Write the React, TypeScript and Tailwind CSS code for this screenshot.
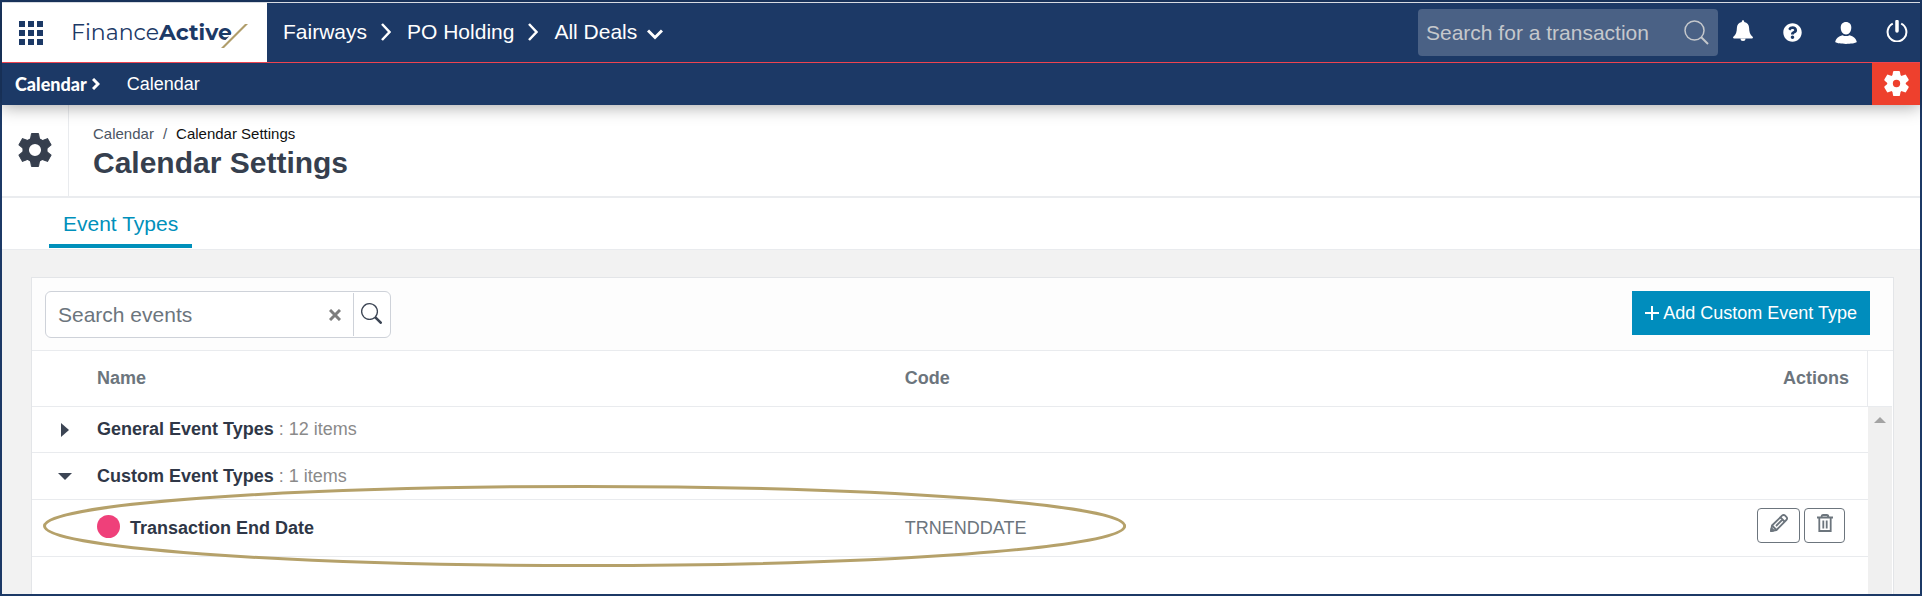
import { useState } from 'react'
import { BsSearch } from 'react-icons/bs'
import { FaQuestionCircle } from 'react-icons/fa'

const navItems = ['Fairways', 'PO Holding']

const customEvents = [{ name: 'Transaction End Date', code: 'TRNENDDATE' }]

function ChevronRight() {
  return (
    <svg viewBox="0 0 10 18" className="h-[18px] w-[10px]" fill="none" stroke="currentColor" strokeWidth="2.500">
      <path d="M1 1l7.500 8L1 17" />
    </svg>
  )
}

function GearIcon({ className, rounded = false }: { className: string; rounded?: boolean }) {
  return (
    <svg viewBox="0 0 36 36" className={className} fill="none" stroke="currentColor" strokeLinejoin={rounded ? 'round' : 'miter'}>
      <circle cx="18" cy="18" r="9.3" strokeWidth={rounded ? 8 : 6.5} />
      {[0, 60, 120, 180, 240, 300].map((angle) => (
        <path
          key={angle}
          d="M13.500 7l1-5.500h7l1 5.500z"
          fill="currentColor"
          strokeWidth={rounded ? 3 : 1}
          transform={`rotate(${angle} 18 18)`}
        />
      ))}
    </svg>
  )
}

function BellIcon() {
  return (
    <svg viewBox="0 0 20 22" className="h-[22px] w-5" fill="currentColor">
      <path d="M8.800 1.500a1.200 1.200 0 0 1 2.400 0v.4c3.200.6 4.800 2.900 4.900 5.900.1 4 .8 7 3.500 8.900.6.600.5 1.800-.6 1.800H1c-1.100 0-1.200-1.200-.6-1.800C3.100 14.800 3.800 11.800 3.900 7.800c.1-3 1.700-5.300 4.900-5.900z" />
      <path d="M7.500 18.500h5a2.500 2.500 0 0 1-5 0z" />
    </svg>
  )
}

function UserIcon() {
  return (
    <svg viewBox="0 0 22 22" className="size-[22px]" fill="currentColor">
      <path d="M11 0c3.300 0 5.300 2.300 5.300 5.500 0 3.800-2.100 7-5.300 7s-5.300-3.200-5.300-7C5.700 2.300 7.700 0 11 0z" />
      <path d="M7.500 13.200c2.200 1.200 4.800 1.200 7 0 4 1 6.800 3.600 7.300 6.900C18.500 22.600 3.500 22.600.2 20.100.7 16.800 3.500 14.200 7.500 13.200z" />
    </svg>
  )
}

function PowerIcon() {
  return (
    <svg viewBox="0 0 22 22" className="size-[22px]" fill="none" stroke="currentColor" strokeLinecap="round">
      <path d="M6.800 3.600a9.400 9.400 0 1 0 8.400 0" strokeWidth="2" strokeLinecap="butt" />
      <path d="M11 1.500v9.500" strokeWidth="3.500" />
    </svg>
  )
}

function PencilIcon() {
  return (
    <svg viewBox="0 0 18 18" className="size-[18px]" fill="none" stroke="currentColor" strokeWidth="1.800" strokeLinejoin="round">
      <path d="M1 17l1-5.500L12 1.700c1-1 2.300-.9 3.200 0l1.100 1.100c.9.900 1 2.200 0 3.200L6.500 16z" />
      <path d="M10.500 3.500l4 4M2 11.500l4.500 4.500M6 12l6.500-6.500M1 17l2.500-.5L1.500 14.500z" />
    </svg>
  )
}

function TrashIcon() {
  return (
    <svg viewBox="0 0 16 18" className="h-[18px] w-4" fill="none" stroke="currentColor" strokeWidth="1.800">
      <path d="M0 3.500h16M2.300 3.500v13.500h11.400V3.500M4.500 3.500c0-1.800.6-2.500 1.800-2.500h3.400c1.200 0 1.800.7 1.800 2.500" />
      <path d="M6.300 6.500v8M9.700 6.500v8" />
    </svg>
  )
}

function Logo() {
  return (
    <a href="#home" className="relative ml-7 block font-[Montserrat,Lato,sans-serif] text-[22px] leading-[30px] text-[#1c3966]">
      <span>Finance</span>
      <span className="font-bold">Active</span>
      <svg viewBox="0 0 27 24" className="absolute -right-4 bottom-0 h-6 w-[27px]">
        <path d="M-3 24L20 0h4L1 24z" fill="#fff" />
        <path d="M0 24L24 0h3L3 24z" fill="#b09d6b" />
      </svg>
    </a>
  )
}

function TopBar() {
  return (
    <header className="flex h-[61px] items-stretch border-t border-b border-t-[#d7dbe2] border-b-[#ee4450] text-white">
      <div className="flex w-[265px] shrink-0 items-center bg-white pl-[17px]">
        <button aria-label="Applications" className="text-[#1c3966]">
          <svg viewBox="0 0 24 24" className="size-6" fill="currentColor">
            <path d="M0 0h6v6H0zM9 0h6v6H9zM18 0h6v6h-6zM0 9h6v6H0zM9 9h6v6H9zM18 9h6v6h-6zM0 18h6v6H0zM9 18h6v6H9zM18 18h6v6h-6z" />
          </svg>
        </button>
        <Logo />
      </div>
      <nav className="flex items-center gap-4 pb-px pl-4 text-[21px]">
        {navItems.map((item) => (
          <div key={item} className="flex items-center gap-[14px]">
            <a href="#nav">{item}</a>
            <ChevronRight />
          </div>
        ))}
        <button className="flex items-center gap-[10px]">
          All Deals
          <svg viewBox="0 0 16 11" className="mt-1 h-[11px] w-4" fill="none" stroke="currentColor" strokeWidth="3">
            <path d="M1 1.500l7 7 7-7" />
          </svg>
        </button>
      </nav>
      <div className="ml-auto flex items-center pr-3">
        <label className="flex h-[47px] w-[300px] items-center rounded bg-[#4a6185] pr-[9px] pl-2">
          <input
            type="text"
            aria-label="Search for a transaction"
            placeholder="Search for a transaction"
            className="min-w-0 flex-1 bg-transparent text-[21px] outline-none placeholder:text-[#c5c8cc]"
          />
          <svg viewBox="0 0 25 25" className="size-[25px]" fill="none" stroke="#c5c8cc">
            <circle cx="10.500" cy="10.500" r="9.500" strokeWidth="1.500" />
            <path d="M17 17l7 7" strokeWidth="2" />
          </svg>
        </label>
        <div className="flex items-center pb-1">
          <button aria-label="Notifications" className="ml-[15px]"><BellIcon /></button>
          <button aria-label="Help" className="mt-1 ml-[30px]"><FaQuestionCircle className="size-[19px]" /></button>
          <button aria-label="Account" className="mt-1 ml-[33px]"><UserIcon /></button>
          <button aria-label="Sign out" className="ml-[29px]"><PowerIcon /></button>
        </div>
      </div>
    </header>
  )
}

function SubBar() {
  return (
    <div className="flex h-[42px] items-center pl-[13px] text-[18px] text-white">
      <a href="#calendar" className="flex items-center gap-[5px] font-[Lato,sans-serif] font-black">
        Calendar
        <svg viewBox="0 0 8 12" className="h-3 w-2" fill="none" stroke="currentColor" strokeWidth="3">
          <path d="M1 1l5 5-5 5" />
        </svg>
      </a>
      <a href="#calendar-view" className="ml-[27px]">Calendar</a>
      <button aria-label="Settings" className="ml-auto flex h-full w-12 items-center justify-center bg-[#ee402d] pb-0.5">
        <GearIcon className="size-[25px]" rounded />
      </button>
    </div>
  )
}

function Toolbar() {
  const [search, setSearch] = useState('')

  return (
    <div className="flex items-start justify-between bg-[#fdfdfd] pt-[13px] pr-[23px] pb-3 pl-[13px]">
      <div className="flex h-[47px] w-[346px] items-center rounded-md border border-[#ced2d9] bg-white">
        <input
          type="text"
          aria-label="Search events"
          placeholder="Search events"
          value={search}
          onChange={(e) => setSearch(e.target.value)}
          className="min-w-0 flex-1 pl-3 text-[21px] outline-none placeholder:text-[#6c757d]"
        />
        <button aria-label="Clear search" onClick={() => setSearch('')} className="mr-3">
          <svg viewBox="0 0 12 12" className="size-3" stroke="#7d7d7d" strokeWidth="3">
            <path d="M1 1l10 10M11 1L1 11" />
          </svg>
        </button>
        <button aria-label="Search" className="flex h-[43px] w-[37px] items-center border-l border-[#ced2d9] pb-0.5 pl-[7px] text-[#3c4554]">
          <BsSearch className="size-[21px]" />
        </button>
      </div>
      <button className="flex h-11 items-center gap-1 bg-[#008dbd] px-[13px] text-[18px] text-white">
        <svg viewBox="0 0 14 14" className="size-[14px]" stroke="currentColor" strokeWidth="2">
          <path d="M7 0v14M0 7h14" />
        </svg>
        Add Custom Event Type
      </button>
    </div>
  )
}

function EventTable() {
  const [generalOpen, setGeneralOpen] = useState(false)
  const [customOpen, setCustomOpen] = useState(true)

  const groups = [
    { name: 'General Event Types', count: 12, open: generalOpen, toggle: () => setGeneralOpen(!generalOpen), height: 'h-[46px]' },
    { name: 'Custom Event Types', count: 1, open: customOpen, toggle: () => setCustomOpen(!customOpen), height: 'h-[47px]' },
  ]

  return (
    <table className="w-full table-fixed border-separate border-spacing-0 text-left text-[18px] text-[#6c757d]">
      <colgroup>
        <col className="w-[65px]" />
        <col className="w-[44%]" />
        <col />
        <col className="w-[200px]" />
      </colgroup>
      <thead>
        <tr className="h-[56px] *:border-b *:border-[#e9ebee]">
          <th aria-label="Expand" />
          <th>Name</th>
          <th>Code</th>
          <th className="border-r border-r-[#dcdfe3] pr-[18px] text-right">Actions</th>
        </tr>
      </thead>
      <tbody>
        {groups.map((group) => (
          <tr key={group.name} className={`${group.height} *:border-b *:border-[#e9ebee]`}>
            <td className="pl-[26px]">
              <button aria-label={`Toggle ${group.name}`} onClick={group.toggle} className="flex size-[14px] items-center justify-center text-[#3c4554]">
                {group.open ? (
                  <svg viewBox="0 0 14 7" className="h-[7px] w-[14px]" fill="currentColor"><path d="M0 0h14L7 7z" /></svg>
                ) : (
                  <svg viewBox="0 0 8 14" className="h-[14px] w-2" fill="currentColor"><path d="M0 0v14l8-7z" /></svg>
                )}
              </button>
            </td>
            <td colSpan={3}>
              <span className="font-bold text-[#2f3747]">{group.name}</span>
              <span className="text-[#8a8a8a]"> : {group.count} items</span>
            </td>
          </tr>
        ))}
        {customOpen && customEvents.map((event) => (
          <tr key={event.code} className="relative h-[57px] *:border-b *:border-[#e9ebee]">
            <td>
              {/* highlight ring */}
              <svg viewBox="0 0 1084 82" preserveAspectRatio="none" className="pointer-events-none absolute top-[-15px] left-[11px] h-[82px] w-[59%]" fill="none">
                <ellipse cx="542" cy="41" rx="540.500" ry="39.500" stroke="#b5a16a" strokeWidth="3" />
              </svg>
            </td>
            <td>
              <div className="flex items-center gap-[10px] font-bold text-[#2f3747]">
                <span className="mb-1 size-[23px] rounded-full bg-[#ef407a]" />
                {event.name}
              </div>
            </td>
            <td>{event.code}</td>
            <td className="pr-[23px] pb-1.5">
              <div className="flex justify-end gap-1">
                <button aria-label="Edit" className="flex h-[35px] w-[43px] items-center justify-center rounded border border-[#6c757d] pb-1">
                  <PencilIcon />
                </button>
                <button aria-label="Delete" className="flex h-[35px] w-[41px] items-center justify-center rounded border border-[#6c757d] pb-1">
                  <TrashIcon />
                </button>
              </div>
            </td>
          </tr>
        ))}
      </tbody>
    </table>
  )
}

export default function App() {
  return (
    <div className="flex min-h-screen flex-col border-2 border-[#1c3966] bg-[#f2f2f2] font-['Liberation_Sans',Arial,sans-serif]">
      <div className="relative z-10 bg-[#1c3966] shadow-[0_2px_16px_rgba(0,0,0,0.35)]">
        <TopBar />
        <SubBar />
      </div>

      <div className="flex h-[93px] border-b-2 border-[#eaecef] bg-white">
        <div className="flex w-[67px] shrink-0 items-center justify-center border-r border-[#e9ebee] pb-0.5">
          <GearIcon className="size-9 text-[#363f4e]" />
        </div>
        <div className="pt-5 pl-6">
          <nav className="flex gap-[9px] text-[15px] leading-[18px] text-[#4b5563]">
            <a href="#calendar">Calendar</a>
            <span>/</span>
            <a href="#calendar-settings" className="text-[#111111]">Calendar Settings</a>
          </nav>
          <h1 className="text-[30px] leading-10 font-bold text-[#363f4e]">Calendar Settings</h1>
        </div>
      </div>

      <nav className="flex h-[52px] items-start border-b border-[#e9ebee] bg-white pl-[47px]">
        <a href="#event-types" className="h-[50px] border-b-4 border-[#0090bb] px-[14px] text-[21px] leading-[52px] text-[#0090bb]">
          Event Types
        </a>
      </nav>

      <main className="flex flex-1 flex-col pt-[27px] pr-[26px] pl-[29px]">
        <section className="flex flex-1 flex-col border border-b-0 border-[#e3e5e8] bg-white">
          <Toolbar />
          <div className="flex flex-1 border-t border-[#e9ebee]">
            <div className="min-w-0 flex-1">
              <EventTable />
            </div>
            <div className="mr-px flex w-6 flex-col">
              <div className="h-[55px]" />
              <div className="flex flex-1 justify-center border-t border-[#e9ebee] bg-[#f0f0f0] pt-[10px]">
                <svg viewBox="0 0 12 6" className="h-[6px] w-3" fill="#a3a3a3"><path d="M6 0l6 6H0z" /></svg>
              </div>
            </div>
          </div>
        </section>
      </main>
    </div>
  )
}
